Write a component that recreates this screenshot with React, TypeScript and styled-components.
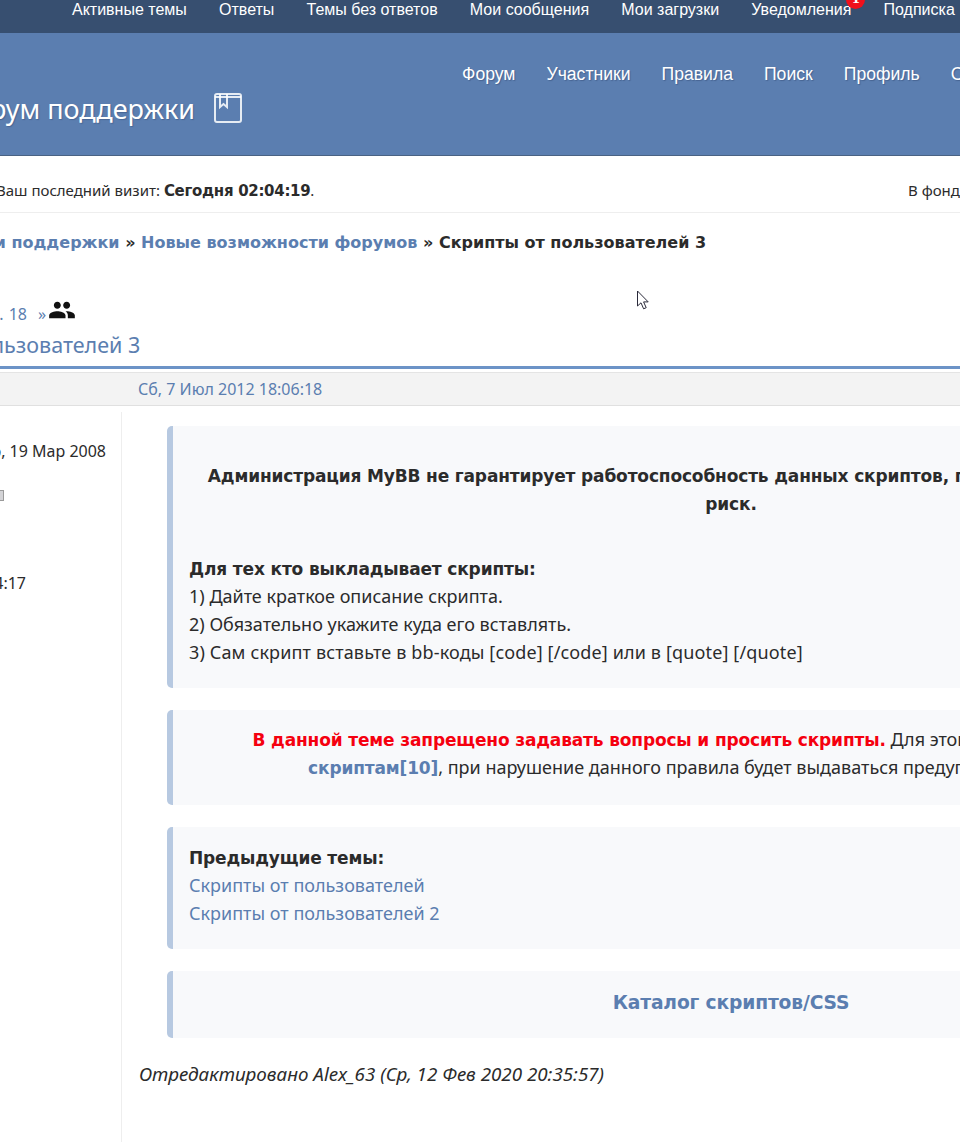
import { createGlobalStyle } from "styled-components";
import styled from "styled-components";
import { MdPeople } from "react-icons/md";

const GlobalStyle = createGlobalStyle`
    html, body {
        margin: 0;
        padding: 0;
        background: #fff;
    }
    b {
        font-family: "DejaVu Sans", Verdana, sans-serif;
    }
`

const Frame = styled.div`
    height: 1142px;
    overflow: hidden;
    position: relative;
    width: 960px;
`

// the photographed page is scrolled sideways, so everything sits in a wider sheet
const Sheet = styled.div`
    color: #2b2b2b;
    font-family: "Noto Sans", Tahoma, sans-serif;
    font-size: 16px;
    margin-left: -300px;
    width: 1640px;
`

const TopBar = styled.nav`
    background: #374f70;
    box-sizing: border-box;
    display: flex;
    font-family: "Liberation Sans", Arial, sans-serif;
    font-size: 16px;
    gap: 32.2px;
    height: 33px;
    line-height: 20px;
    padding-left: 372px;
`

const TopLink = styled.a`
    color: #fff;
    position: relative;
    white-space: nowrap;
`

const Badge = styled.span`
    background: #f0101c;
    border-radius: 50%;
    color: #fff;
    font-family: "DejaVu Serif", serif;
    font-size: 12px;
    font-weight: bold;
    height: 19px;
    left: 95px;
    line-height: 18px;
    position: absolute;
    text-align: center;
    top: -10px;
    width: 19px;
`

const Header = styled.header`
    background: #5b7eb0;
    border-bottom: 1px solid #4a6283;
    display: flex;
    height: 122px;
`

const Brand = styled.div`
    align-items: center;
    box-sizing: border-box;
    display: flex;
    flex: 0 0 762px;
    gap: 19px;
    height: 100%;
    justify-content: flex-end;
    padding: 28px 220px 0 0;
`

const BrandTitle = styled.span`
    color: #fff;
    font-size: 27px;
    text-shadow: 1px 1px 1px rgba(40, 60, 100, 0.35);
    white-space: nowrap;
`

const MainNav = styled.nav`
    display: flex;
    font-family: "Liberation Sans", Arial, sans-serif;
    font-size: 17.6px;
    gap: 31px;
    padding-top: 31px;
`

const MainLink = styled.a`
    color: #fff;
    line-height: 20px;
    text-shadow: 1px 1px 1px rgba(40, 60, 100, 0.4);
    white-space: nowrap;
`

const InfoBar = styled.div`
    border-bottom: 1px solid #eee;
    display: grid;
    font-size: 15px;
    grid-template-columns: 1208px 1fr;
    height: 56px;
    line-height: 68px;

    b {
        font-size: 15px;
        letter-spacing: -0.3px;
    }
`

const InfoLeft = styled.div`
    padding-left: 296px;
`

const Breadcrumbs = styled.div`
    font-family: "DejaVu Sans", Verdana, sans-serif;
    font-size: 16px;
    font-weight: bold;
    line-height: 22px;
    padding: 19px 0 0 244px;
`

const BlueLink = styled.a`
    color: #5b7eb0;
`

const Pagination = styled.div`
    align-items: center;
    color: #5b7eb0;
    display: flex;
    font-size: 16px;
    height: 28px;
    margin-top: 46px;
    padding-left: 191px;
`

const PageDots = styled.span`
    margin-right: 5px;
`

const PageArrow = styled.span`
    margin-left: 11px;
`

const GroupIcon = styled(MdPeople)`
    color: #111;
    margin: 0 0 8px 2px;
`

const Heading = styled.h1`
    color: #5b7eb0;
    font-size: 21.5px;
    font-weight: normal;
    line-height: 30px;
    margin: 2px 0 0;
    padding-left: 141px;
`

const Rule = styled.div`
    background: #6c93c7;
    height: 3px;
    margin-top: 6px;
`

const PostBar = styled.div`
    background: #f3f3f3;
    border-bottom: 1px solid #e0e0e0;
    border-top: 1px solid #e4e4e4;
    color: #5b7eb0;
    height: 32px;
    line-height: 33px;
    margin-top: 3px;
    padding-left: 438px;
`

const PostRow = styled.div`
    display: flex;
    padding-top: 6px;
`

const Sidebar = styled.aside`
    border-right: 1px solid #eee;
    box-sizing: border-box;
    flex: 0 0 422px;
    height: 730px;
    padding-top: 29px;
`

const SideLine = styled.div<{ $gap: number; $right: number }>`
    line-height: 20px;
    margin-top: ${({ $gap }) => $gap}px;
    padding-right: ${({ $right }) => $right}px;
    text-align: right;
    white-space: nowrap;
`

const SideIcon = styled.span`
    background: #d3d3d6;
    border: 1px solid #9a9a9a;
    box-sizing: border-box;
    display: block;
    height: 11px;
    margin-top: 29px;
    margin-left: 290px;
    width: 14px;
`

const PostBody = styled.div`
    display: flex;
    flex: 1;
    flex-direction: column;
    gap: 22px;
    padding: 14px 45px 0;
`

const Notice = styled.div<{ $pad: string }>`
    background: #f8f9fb;
    border-left: 6px solid #b7c9e1;
    border-radius: 5px;
    font-size: 18px;
    line-height: 28px;
    padding: ${({ $pad }) => $pad};

    b {
        font-size: 17px;
        letter-spacing: -0.15px;
        line-height: 1;
    }
`

const Center = styled.div`
    text-align: center;
`

const Warning = styled.b`
    color: #f5000f;
`

const NoticeLink = styled.a`
    color: #5b7eb0;
`

const CatalogLink = styled(NoticeLink)`
    b {
        font-size: 18.7px;
    }
`

const CodeLine = styled.span`
    letter-spacing: 0.14px;
`

const Spacer = styled.div`
    height: 37px;
`

const Edited = styled.div`
    font-size: 18.8px;
    font-style: italic;
    line-height: 28px;
    margin: 0 0 0 -28px;
`

const Pointer = styled.svg`
    left: 636px;
    position: absolute;
    top: 290px;
`

const BookIcon = () => (
    <svg width="28" height="30" viewBox="0 0 28 30" fill="none" stroke="#fff" strokeWidth="2">
        <rect x="1" y="1" width="26" height="28" rx="2" opacity="0.85" />
        <path d="M1 4h26" opacity="0.85" />
        <path d="M6 1v13l3.5-3 3.5 3V1" opacity="0.85" />
    </svg>
)

const topLinks = ["Активные темы", "Ответы", "Темы без ответов", "Мои сообщения", "Мои загрузки", "Уведомления", "Подписка"];
const mainLinks = ["Форум", "Участники", "Правила", "Поиск", "Профиль", "Сообщения"];

const App = () => {
    return (
        <Frame>
            <GlobalStyle />
            <Sheet>
                <TopBar>
                    {topLinks.map((item) => (
                        <TopLink key={item}>
                            {item}
                            {item === "Уведомления" ? <Badge>1</Badge> : ''}
                        </TopLink>
                    ))}
                </TopBar>
                <Header>
                    <Brand>
                        <BrandTitle>Форум поддержки</BrandTitle>
                        <BookIcon />
                    </Brand>
                    <MainNav>
                        {mainLinks.map((item) => <MainLink key={item}>{item}</MainLink>)}
                    </MainNav>
                </Header>
                <InfoBar>
                    <InfoLeft>Ваш последний визит: <b>Сегодня 02:04:19</b>.</InfoLeft>
                    <div>В фонд форума</div>
                </InfoBar>
                <Breadcrumbs>
                    <BlueLink>Форум поддержки</BlueLink> » <BlueLink>Новые возможности форумов</BlueLink> » Скрипты от пользователей 3
                </Breadcrumbs>
                <Pagination>
                    <PageDots>Страницы: 1 ...</PageDots> 18 <PageArrow>»</PageArrow><GroupIcon size={28} />
                </Pagination>
                <Heading>Скрипты от пользователей 3</Heading>
                <Rule />
                <PostBar>Сб, 7 Июл 2012 18:06:18</PostBar>
                <PostRow>
                    <Sidebar>
                        <SideLine $gap={0} $right={15}>Зарегистрирован: Ср, 19 Мар 2008</SideLine>
                        <SideIcon />
                        <SideLine $gap={72} $right={95}>Последний визит: Сегодня 01:44:17</SideLine>
                    </Sidebar>
                    <PostBody>
                        <Notice $pad="35px 22px 22px 16px">
                            <Center>
                                <b>Администрация MyBB не гарантирует работоспособность данных скриптов, применяйте их на свой страх и<br />риск.</b>
                            </Center>
                            <Spacer />
                            <b>Для тех кто выкладывает скрипты:</b><br />
                            1) Дайте краткое описание скрипта.<br />
                            2) Обязательно укажите куда его вставлять.<br />
                            <CodeLine>3) Сам скрипт вставьте в bb-коды [code] [/code] или в [quote] [/quote]</CodeLine>
                        </Notice>
                        <Notice $pad="15px 16px 24px">
                            <Center>
                                <Warning>В данной теме запрещено задавать вопросы и просить скрипты.</Warning> Для этого есть своя тема вопросы по<br />
                                <NoticeLink><b>скриптам[10]</b></NoticeLink>, при нарушение данного правила будет выдаваться предупреждение и удаление.
                            </Center>
                        </Notice>
                        <Notice $pad="16px 16px 22px">
                            <b>Предыдущие темы:</b><br />
                            <NoticeLink>Скрипты от пользователей</NoticeLink><br />
                            <NoticeLink>Скрипты от пользователей 2</NoticeLink>
                        </Notice>
                        <Notice $pad="17px 22px 22px 16px">
                            <Center><CatalogLink><b>Каталог скриптов/CSS</b></CatalogLink></Center>
                        </Notice>
                        <Edited>Отредактировано Alex_63 (Ср, 12 Фев 2020 20:35:57)</Edited>
                    </PostBody>
                </PostRow>
            </Sheet>
            <Pointer width="15" height="21" viewBox="0 0 15 21">
                <path d="M1.5 1v15l3.5-3.2 2.6 6 2.6-1.1-2.6-5.8h4.6z" fill="#fff" stroke="#2a2a3a" strokeWidth="1" />
            </Pointer>
        </Frame>
    )
}

export default App;
